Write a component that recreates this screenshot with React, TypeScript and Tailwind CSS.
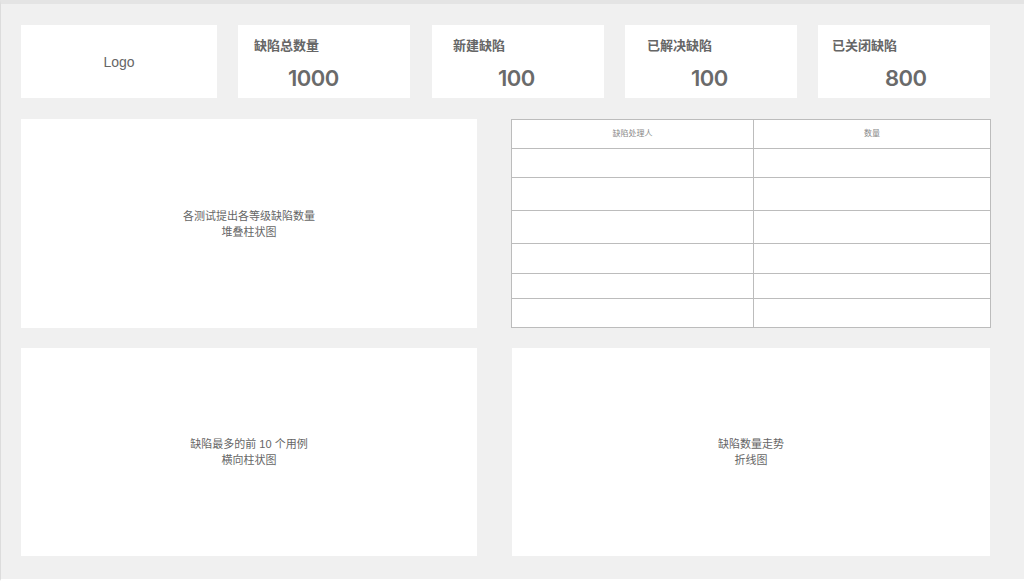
import React from 'react';

const stats = [
  { title: '缺陷总数量', value: '1000', titlePad: 'pl-[16px]', valuePad: 'pl-[50px]' },
  { title: '新建缺陷', value: '100', titlePad: 'pl-[21px]', valuePad: 'pl-[66px]' },
  { title: '已解决缺陷', value: '100', titlePad: 'pl-[22px]', valuePad: 'pl-[66px]' },
  { title: '已关闭缺陷', value: '800', titlePad: 'pl-[14px]', valuePad: 'pl-[67px]' },
];

const rowHeights = ['h-[29px]', 'h-[33px]', 'h-[33px]', 'h-[30px]', 'h-[25px]', 'h-[30px]'];

const Placeholder = ({ lines, className }: { lines: string[]; className: string }) => (
  <div className={`bg-white flex flex-col items-center justify-center text-[11px] leading-[16px] text-[#666] ${className}`}>
    {lines.map((l) => (
      <div key={l}>{l}</div>
    ))}
  </div>
);

const App = () => {
  return (
    <div
      className="w-[1024px] h-[581px] bg-[#f0f0f0] border-t-[4px] border-t-[#e4e4e4] border-l border-l-[#dcdcdc] border-b-[2px] border-b-white overflow-hidden"
      style={{ fontFamily: '"Liberation Sans", "Noto Sans CJK SC", sans-serif' }}
    >
      <div className="pt-[21px] pl-[20px] flex flex-col">
        {/* top stat row */}
        <div className="flex h-[73px]">
          <div className="w-[196px] bg-white flex items-center justify-center text-[14px] text-[#666] pt-[1px]">
            Logo
          </div>
          {stats.map((s, i) => (
            <div
              key={s.title}
              className={`w-[172px] bg-white flex flex-col ${i === 1 ? 'ml-[22px]' : 'ml-[21px]'}`}
            >
              <div className={`mt-[13px] text-[13px] leading-[16px] font-bold text-[#666] ${s.titlePad}`}>
                {s.title}
              </div>
              <div
                className={`mt-[11px] text-[22px] leading-[26px] font-semibold tracking-[-0.5px] text-[#6a6a6a] ${s.valuePad}`}
                style={{ fontFamily: 'Inter, "Liberation Sans", sans-serif' }}
              >
                {s.value}
              </div>
            </div>
          ))}
        </div>

        {/* middle row */}
        <div className="flex mt-[21px] h-[209px]">
          <Placeholder className="w-[456px]" lines={['各测试提出各等级缺陷数量', '堆叠柱状图']} />
          <div className="ml-[34px] w-[480px] bg-white border border-[#bcbcbc] flex flex-col">
            <div className="flex h-[29px] border-b border-[#bcbcbc] text-[8px] text-[#888]">
              <div className="w-[242px] border-r border-[#bcbcbc] flex items-center justify-center">缺陷处理人</div>
              <div className="flex-1 flex items-center justify-center">数量</div>
            </div>
            {rowHeights.slice(0, 5).map((h, i) => (
              <div key={i} className={`flex border-b border-[#bcbcbc] ${h}`}>
                <div className="w-[242px] border-r border-[#bcbcbc]" />
                <div className="flex-1" />
              </div>
            ))}
            <div className="flex flex-1">
              <div className="w-[242px] border-r border-[#bcbcbc]" />
              <div className="flex-1" />
            </div>
          </div>
        </div>

        {/* bottom row */}
        <div className="flex mt-[20px] h-[208px]">
          <Placeholder className="w-[456px]" lines={['缺陷最多的前 10 个用例', '横向柱状图']} />
          <Placeholder className="ml-[35px] w-[478px]" lines={['缺陷数量走势', '折线图']} />
        </div>
      </div>
    </div>
  );
};

export default App;
